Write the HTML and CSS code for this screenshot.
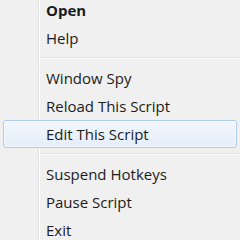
FILE: index.html
```html
<!DOCTYPE html>
<html>
<head>
<meta charset="utf-8">
<link rel="stylesheet" href="styles.css">
</head>
<body>
<div class="menu">
  <div class="item bold">Open</div>
  <div class="item">Help</div>
  <div class="sep"></div>
  <div class="item">Window Spy</div>
  <div class="item">Reload This Script</div>
  <div class="item hover">Edit This Script</div>
  <div class="sep"></div>
  <div class="item">Suspend Hotkeys</div>
  <div class="item">Pause Script</div>
  <div class="item">Exit</div>
</div>
</body>
</html>
```
FILE: styles.css
```css
html, body {
  margin: 0;
  padding: 0;
  background: #f0f0f0;
  width: 240px;
  height: 240px;
  overflow: hidden;
}
.menu {
  display: flex;
  flex-direction: column;
  margin-top: -4px;
  min-height: 260px;
  font-family: "Open Sans", "Noto Sans", sans-serif;
  font-size: 15px;
  color: #1b1b1b;
  background: linear-gradient(to right, transparent 38px, #e1e2e2 38px, #e1e2e2 39px, #ffffff 39px, #ffffff 40px, transparent 40px);
}
.item {
  height: 28px;
  line-height: 26px;
  padding-left: 45px;
  margin: 0 3px;
  padding-left: 42px;
  box-sizing: border-box;
  border: 1px solid transparent;
  border-radius: 3px;
  white-space: nowrap;
}
.bold {
  font-weight: 700;
}
.hover {
  border-color: #aecbef;
  background: linear-gradient(#f3f7fc, #e4edf9);
  box-shadow: inset 0 0 0 1px rgba(255, 255, 255, 0.6);
}
.sep {
  height: 12px;
  display: flex;
  flex-direction: column;
  justify-content: center;
  margin-left: 40px;
}
.sep::before {
  content: "";
  display: block;
  height: 1px;
  background: #e0e0e0;
  border-bottom: 1px solid #ffffff;
}
```
